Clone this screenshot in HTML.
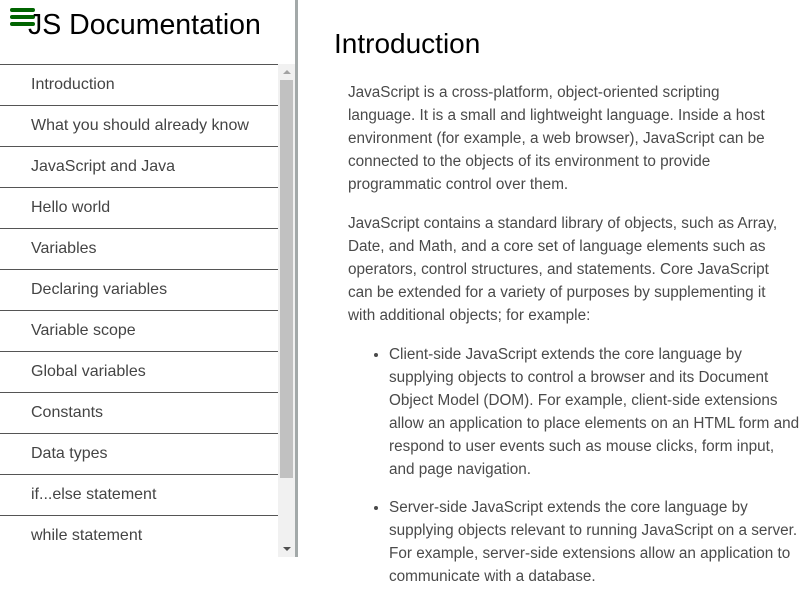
<!DOCTYPE html>
<html><head><style>
*{box-sizing:border-box}
body{margin:0;width:811px;height:557px;overflow:hidden;font-family:"Liberation Sans",Arial,sans-serif;background:#fff;position:relative}
#side{position:absolute;left:0;top:0;width:298px;height:557px;border-right:3px solid #a3a9a9;background:#fff}
#ham{position:absolute;left:10px;top:8px;width:25px}
#ham i{display:block;height:4px;background:#006400;margin-bottom:3px;border-radius:2px}
#title{position:absolute;left:28px;top:9px;font-size:28.5px;color:#000;white-space:nowrap}
#list{position:absolute;left:0;top:64px;width:278px}
#list div{height:41px;border-top:1px solid #555;padding-left:31px;line-height:40px;font-size:16px;color:#444}
#sb{position:absolute;left:278px;top:64px;width:17px;height:493px;background:#f1f1f1}
#thumb{position:absolute;left:2px;top:16px;width:13px;height:398px;background:#c1c1c1}
.ar{position:absolute;left:5px;width:0;height:0;border-left:4px solid transparent;border-right:4px solid transparent}
#main{position:absolute;left:334px;top:0;width:460px}
h1{font-weight:normal;font-size:28px;margin:0;position:absolute;top:28px;left:0;color:#000}
#body{position:absolute;left:14px;top:81px;width:442px;font-size:15.3px;line-height:23px;color:#4a4a4a}
p{margin:0 0 16px}
ul{margin:0 -12px 0 0;padding-left:41px}
li{margin-bottom:15px}
</style></head><body>
<div id="side">
<div id="ham"><i></i><i></i><i></i></div>
<div id="title">JS Documentation</div>
<div id="list">
<div>Introduction</div><div>What you should already know</div><div>JavaScript and Java</div><div>Hello world</div><div>Variables</div><div>Declaring variables</div><div>Variable scope</div><div>Global variables</div><div>Constants</div><div>Data types</div><div>if...else statement</div><div>while statement</div>
</div>
<div id="sb"><div class="ar" style="top:6px;border-bottom:4px solid #a3a3a3"></div><div id="thumb"></div><div class="ar" style="top:483px;border-top:4px solid #505050"></div></div>
</div>
<div id="main">
<h1>Introduction</h1>
<div id="body">
<p>JavaScript is a cross-platform, object-oriented scripting language. It is a small and lightweight language. Inside a host environment (for example, a web browser), JavaScript can be connected to the objects of its environment to provide programmatic control over them.</p>
<p>JavaScript contains a standard library of objects, such as Array, Date, and Math, and a core set of language elements such as operators, control structures, and statements. Core JavaScript can be extended for a variety of purposes by supplementing it with additional objects; for example:</p>
<ul>
<li>Client-side JavaScript extends the core language by supplying objects to control a browser and its Document Object Model (DOM). For example, client-side extensions allow an application to place elements on an HTML form and respond to user events such as mouse clicks, form input, and page navigation.</li>
<li>Server-side JavaScript extends the core language by supplying objects relevant to running JavaScript on a server. For example, server-side extensions allow an application to communicate with a database.</li>
</ul>
</div>
</div>
</body></html>
